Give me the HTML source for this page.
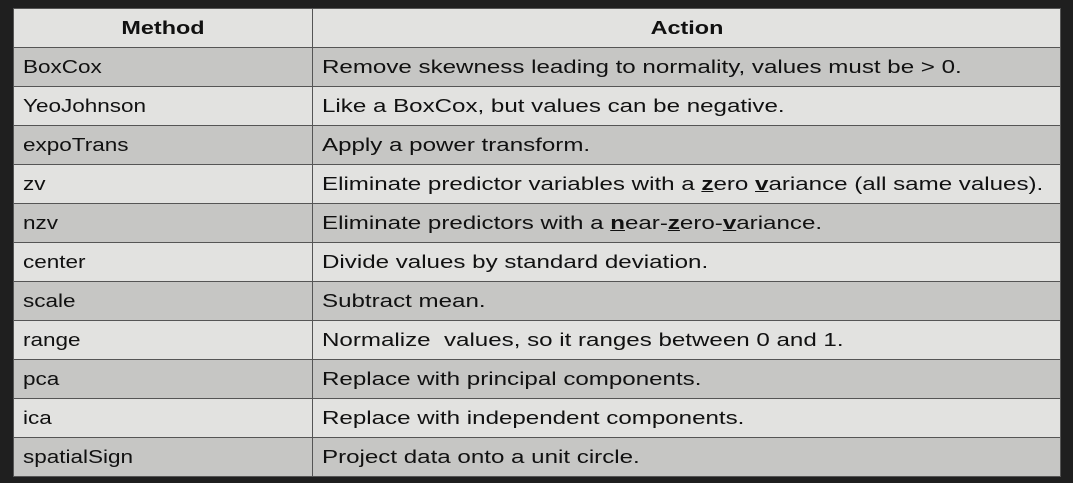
<!DOCTYPE html><html><head><style>
body{margin:0;background:#1f1f1f;width:1073px;height:483px;overflow:hidden}
table{position:absolute;left:13px;top:8px;width:1048px;border-collapse:collapse;font-family:"Liberation Sans",sans-serif;font-size:18px;color:#111;table-layout:fixed}
td,th{height:38px;border:1px solid #555;padding:0 0 0 9px;text-align:left;white-space:nowrap;overflow:visible}
th{text-align:center;font-weight:bold;padding:0;font-size:18px}
tr:nth-child(odd){background:#e2e2e0}
tr:nth-child(even){background:#c6c6c4}
td:first-child,th:first-child{width:298px}
span{display:inline-block;transform-origin:left center}
td:first-child span{transform:scaleX(1.25)}
td:nth-child(2) span{transform:scaleX(1.34)}
th span{transform:scaleX(1.3);transform-origin:center}
</style></head><body><table>
<tr><th><span>Method</span></th><th><span>Action</span></th></tr>
<tr><td><span>BoxCox</span></td><td><span>Remove skewness leading to normality, values must be &gt; 0.</span></td></tr>
<tr><td><span>YeoJohnson</span></td><td><span>Like a BoxCox, but values can be negative.</span></td></tr>
<tr><td><span>expoTrans</span></td><td><span>Apply a power transform.</span></td></tr>
<tr><td><span>zv</span></td><td><span>Eliminate predictor variables with a <b><u>z</u></b>ero <b><u>v</u></b>ariance (all same values).</span></td></tr>
<tr><td><span>nzv</span></td><td><span>Eliminate predictors with a <b><u>n</u></b>ear-<b><u>z</u></b>ero-<b><u>v</u></b>ariance.</span></td></tr>
<tr><td><span>center</span></td><td><span>Divide values by standard deviation.</span></td></tr>
<tr><td><span>scale</span></td><td><span>Subtract mean.</span></td></tr>
<tr><td><span>range</span></td><td><span>Normalize&nbsp; values, so it ranges between 0 and 1.</span></td></tr>
<tr><td><span>pca</span></td><td><span>Replace with principal components.</span></td></tr>
<tr><td><span>ica</span></td><td><span>Replace with independent components.</span></td></tr>
<tr><td><span>spatialSign</span></td><td><span>Project data onto a unit circle.</span></td></tr>
</table></body></html>
